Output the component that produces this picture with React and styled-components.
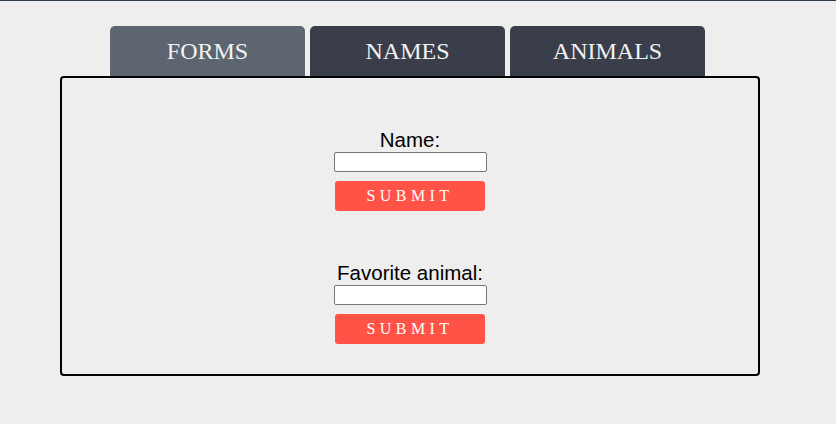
import React, { useState } from "react";
import styled, { createGlobalStyle } from "styled-components";

const GlobalStyle = createGlobalStyle`
  html, body {
    margin: 0;
    padding: 0;
    background-color: #eeeeee;
  }
  body {
    font-family: "Liberation Sans", Arial, sans-serif;
  }
`;

const tabs = ["FORMS", "NAMES", "ANIMALS"];

const App = () => {
  const [active, setActive] = useState(0);
  const [name, setName] = useState("");
  const [animal, setAnimal] = useState("");

  const handleSubmit = (e) => {
    e.preventDefault();
  };

  return (
    <>
      <GlobalStyle />
      <Page>
        <TabBar>
          {tabs.map((tab, i) => (
            <Tab key={tab} active={active === i} onClick={() => setActive(i)}>
              {tab}
            </Tab>
          ))}
        </TabBar>
        <Panel>
          <Form onSubmit={handleSubmit}>
            <Label htmlFor="name">Name:</Label>
            <Input
              id="name"
              value={name}
              onChange={(e) => setName(e.target.value)}
            />
            <SubmitButton type="submit">Submit</SubmitButton>
          </Form>
          <Form onSubmit={handleSubmit}>
            <Label htmlFor="animal">Favorite animal:</Label>
            <Input
              id="animal"
              value={animal}
              onChange={(e) => setAnimal(e.target.value)}
            />
            <SubmitButton type="submit">Submit</SubmitButton>
          </Form>
        </Panel>
      </Page>
    </>
  );
};

export default App;

const Page = styled.div`
  border-top: 1px solid #2f3d4a;
  padding: 25px 0 0 60px;
  height: 424px;
  box-sizing: border-box;
`;

const TabBar = styled.div`
  display: flex;
  gap: 5px;
  padding-left: 50px;
`;

const Tab = styled.div`
  width: 195px;
  height: 50px;
  line-height: 50px;
  text-align: center;
  border-radius: 5px 5px 0 0;
  background-color: ${(props) => (props.active ? "#5c6570" : "#393e4a")};
  color: #f2f2f2;
  font-family: "Liberation Serif", "Times New Roman", serif;
  font-size: 24px;
  cursor: pointer;
`;

const Panel = styled.div`
  width: 700px;
  height: 300px;
  box-sizing: border-box;
  border: 2px solid #000;
  border-radius: 4px;
  padding-top: 50px;
  display: flex;
  flex-direction: column;
  align-items: center;
  gap: 50px;
`;

const Form = styled.form`
  display: flex;
  flex-direction: column;
  align-items: center;
`;

const Label = styled.label`
  font-size: 20.5px;
  line-height: 24px;
  color: #000;
`;

const Input = styled.input`
  width: 153px;
  height: 20px;
  box-sizing: border-box;
  border: 1px solid #767676;
  border-radius: 2px;
  padding: 1px 2px;
  background: #fff;
  font-size: 13px;
  &:focus {
    outline: none;
  }
`;

const SubmitButton = styled.button`
  margin-top: 9px;
  width: 150px;
  height: 30px;
  border: none;
  border-radius: 3px;
  background-color: #ff5347;
  color: #fff;
  font-family: "Liberation Serif", "Times New Roman", serif;
  font-size: 16px;
  letter-spacing: 4.4px;
  text-transform: uppercase;
  padding: 0;
  cursor: pointer;
`;
